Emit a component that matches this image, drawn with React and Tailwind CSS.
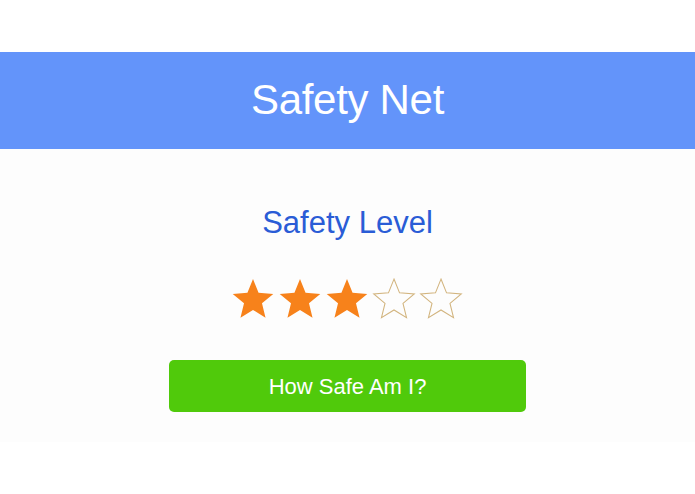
import React from "react";

const STAR = "M12 1.6l2.9 7.2 7.7.55-5.9 4.95 1.85 7.5L12 17.75l-6.55 4.05 1.85-7.5-5.9-4.95 7.7-.55z";

function Star({ filled }) {
  return (
    <svg width="46" height="44" viewBox="0 0 24 23" className="block">
      {filled ? (
        <path d={STAR} fill="#F7821B" />
      ) : (
        <path d={STAR} fill="none" stroke="#D2B47E" strokeWidth="0.55" strokeLinejoin="miter" />
      )}
    </svg>
  );
}

export default function App() {
  const level = 3;
  return (
    <div
      className="w-[695px] h-[494px] bg-white flex flex-col"
      style={{ fontFamily: "'Liberation Sans', Arial, sans-serif" }}
    >
      <div className="h-[52px]" />
      <header className="h-[97px] bg-[#6394FA] flex items-center justify-center">
        <h1 className="text-white text-[42px] leading-none pb-[2px] tracking-[-0.3px]">Safety Net</h1>
      </header>
      <main className="h-[293px] bg-[#FDFDFD] flex flex-col items-center">
        <h2 className="mt-[58px] text-[#2A5CD6] text-[31px] leading-none">Safety Level</h2>
        <div className="mt-[38px] flex gap-[1px] mr-[2px]">
          {[1, 2, 3, 4, 5].map((i) => (
            <Star key={i} filled={i <= level} />
          ))}
        </div>
        <button className="mt-[40px] w-[357px] h-[52px] rounded-[5px] bg-[#50CA0B] text-white text-[22px] flex items-center justify-center">
          How Safe Am I?
        </button>
      </main>
      <div className="flex-1" />
    </div>
  );
}
